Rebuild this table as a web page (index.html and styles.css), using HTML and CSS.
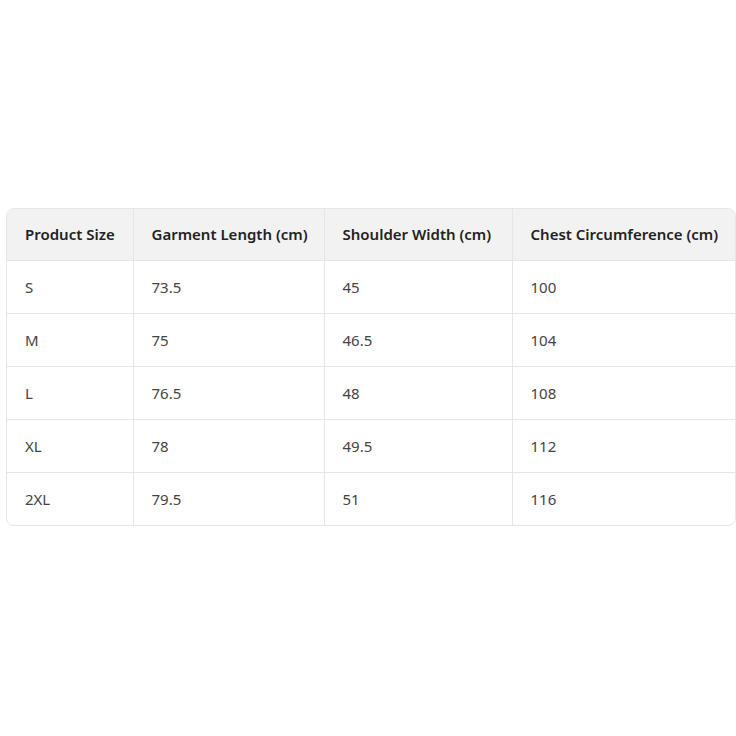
FILE: index.html
```html
<!DOCTYPE html>
<html>
<head>
<meta charset="utf-8">
<link rel="stylesheet" href="styles.css">
</head>
<body>
<div class="page">
  <div class="table-wrap">
    <table class="size-table">
      <colgroup>
        <col class="c1"><col class="c2"><col class="c3"><col class="c4">
      </colgroup>
      <thead>
        <tr><th>Product Size</th><th>Garment Length (cm)</th><th>Shoulder Width (cm)</th><th>Chest Circumference (cm)</th></tr>
      </thead>
      <tbody>
        <tr><td>S</td><td>73.5</td><td>45</td><td>100</td></tr>
        <tr><td>M</td><td>75</td><td>46.5</td><td>104</td></tr>
        <tr><td>L</td><td>76.5</td><td>48</td><td>108</td></tr>
        <tr><td>XL</td><td>78</td><td>49.5</td><td>112</td></tr>
        <tr><td>2XL</td><td>79.5</td><td>51</td><td>116</td></tr>
      </tbody>
    </table>
  </div>
</div>
</body>
</html>
```
FILE: styles.css
```css
html, body {
  margin: 0;
  padding: 0;
  background: #ffffff;
}
.page {
  width: 736px;
  height: 736px;
  display: flex;
  align-items: center;
  justify-content: flex-start;
  padding-left: 6px;
  box-sizing: border-box;
  font-family: "Noto Sans", "Open Sans", sans-serif;
  color: #444444;
}
.table-wrap {
  width: 729px;
  border: 1px solid #e6e6e6;
  border-radius: 8px;
  overflow: hidden;
  margin-top: -3px;
}
.size-table {
  width: 100%;
  border-collapse: collapse;
  table-layout: fixed;
  font-size: 15px;
}
.c1 { width: 126px; }
.c2 { width: 191px; }
.c3 { width: 188px; }
.c4 { width: auto; }
.size-table th,
.size-table td {
  text-align: left;
  padding: 0 18px;
  border-left: 1px solid #e6e6e6;
  border-top: 1px solid #e6e6e6;
  white-space: nowrap;
}
.size-table th:first-child,
.size-table td:first-child {
  border-left: none;
}
.size-table thead th {
  border-top: none;
  background: #f2f2f2;
  font-weight: 600;
  color: #222222;
  height: 51px;
}
.size-table td {
  height: 52px;
  font-weight: 400;
}
```
